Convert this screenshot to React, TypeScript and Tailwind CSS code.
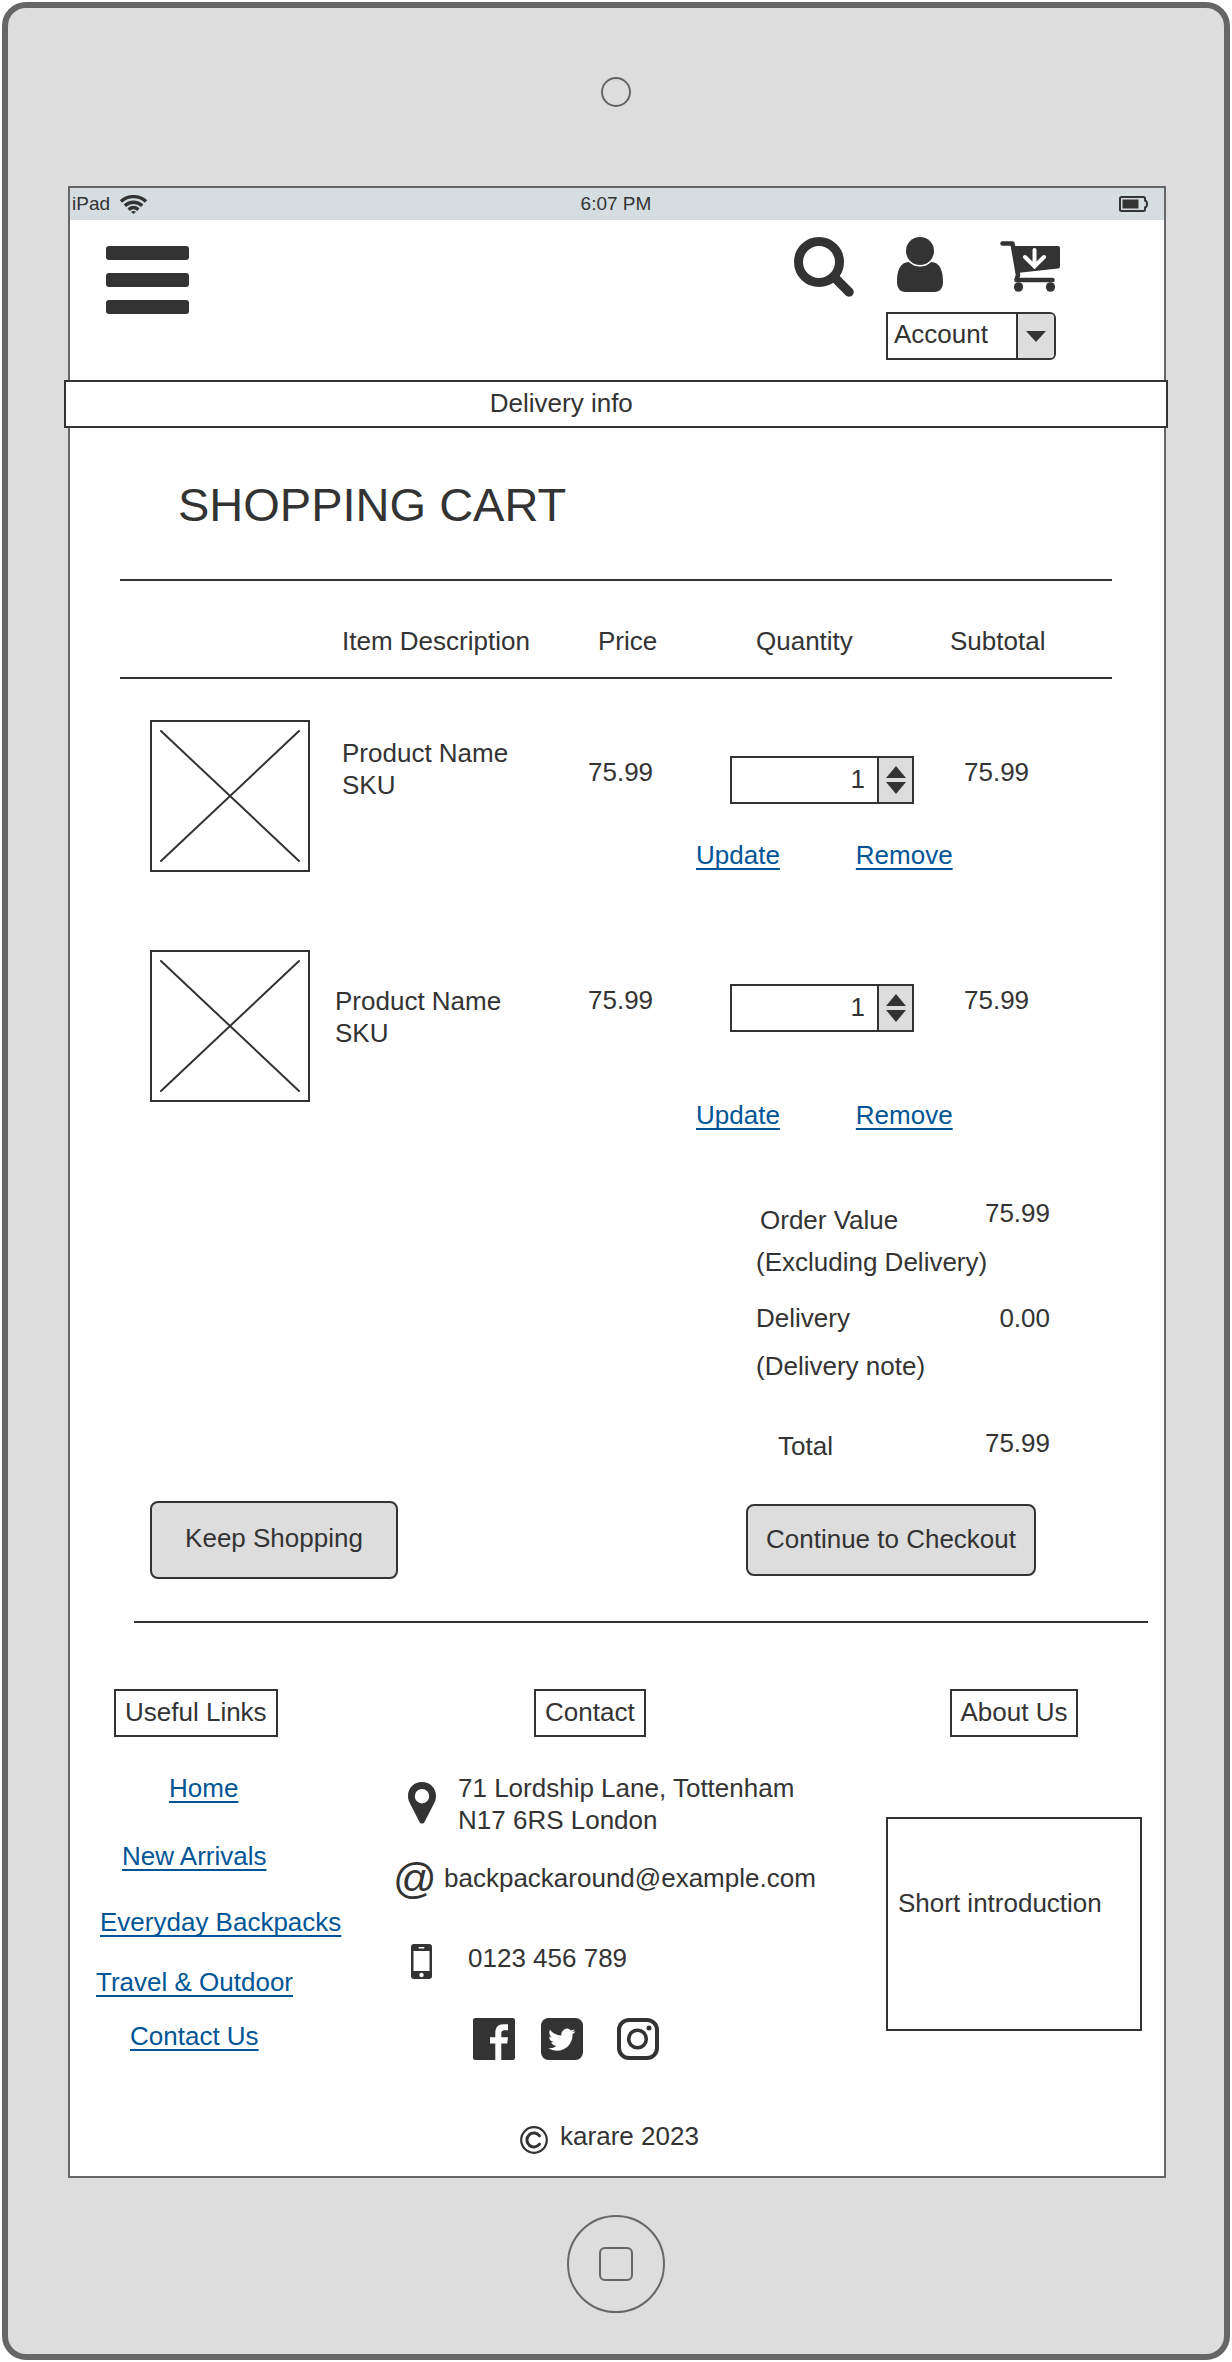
import { useState } from "react";

const linkClass =
  "text-[#005596] underline decoration-2 underline-offset-4 [text-decoration-skip-ink:none]";

function WifiIcon() {
  return (
    <svg width="27" height="19" viewBox="0 0 27 19" fill="none" stroke="#333" strokeWidth="3.400" aria-hidden="true">
      <path d="M1 6.500C8 0 19 0 26 6.500" />
      <path d="M4.800 10.700C10 6 17 6 22.200 10.700" />
      <path d="M8.600 14.600C11.600 12.100 15.400 12.100 18.400 14.600" />
      <path d="M11 16.800C12.400 15.800 14.600 15.800 16 16.800L13.500 19Z" fill="#333" stroke="none" />
    </svg>
  );
}

function BatteryIcon() {
  return (
    <svg width="29" height="16" viewBox="0 0 29 16" aria-hidden="true">
      <path
        d="M2.500 1H24.500Q26 1 26 2.500V4.500Q28 5 28 8T26 11.500V13.500Q26 15 24.500 15H2.500Q1 15 1 13.500V2.500Q1 1 2.500 1Z"
        fill="none"
        stroke="#333"
        strokeWidth="2"
      />
      <rect x="3.500" y="3.500" width="16" height="9" fill="#333" />
    </svg>
  );
}

function SearchIcon() {
  return (
    <svg width="60" height="60" viewBox="0 0 60 60" fill="none" stroke="#333" aria-hidden="true">
      <circle cx="25" cy="25" r="20.500" strokeWidth="9" />
      <path d="M41 41L55 55" strokeWidth="9.500" strokeLinecap="round" />
    </svg>
  );
}

function UserIcon() {
  return (
    <svg width="46" height="55" viewBox="0 0 46 55" fill="#333" aria-hidden="true">
      <path d="M12 25C3 25 0 34 0 44.500C0 51 3 55 8.500 55H37.500C43 55 46 51 46 44.500C46 34 43 25 34 25C27 30.500 19 30.500 12 25Z" />
      <circle cx="23" cy="14" r="15.500" fill="#fff" />
      <circle cx="23" cy="14" r="14" />
    </svg>
  );
}

function CartIcon() {
  return (
    <svg width="60" height="51" viewBox="0 0 60 51" fill="none" aria-hidden="true">
      <path
        d="M2.500 2.500H12.500L18 34L16.500 39H52.500"
        stroke="#333"
        strokeWidth="4.500"
        strokeLinecap="round"
        strokeLinejoin="round"
      />
      <path d="M11 5H58Q60 5 60 7V25.500Q60 27.300 58 27.500L17 32Z" fill="#333" />
      <ellipse cx="18.500" cy="46" rx="4.600" ry="4.800" fill="#333" />
      <ellipse cx="50.500" cy="46" rx="4.600" ry="4.800" fill="#333" />
      <path d="M34.500 9V25M25 16L34.500 25.500L44 16" stroke="#fff" strokeWidth="4" strokeLinecap="round" />
    </svg>
  );
}

function PinIcon() {
  return (
    <svg width="28" height="42" viewBox="0 0 28 42" fill="#333" aria-hidden="true">
      <path
        fillRule="evenodd"
        d="M14 0C22 0 28 6 28 14C28 17 27 19.500 26 21.500L16.500 40C15.500 42 12.500 42 11.500 40L2 21.500C1 19.500 0 17 0 14C0 6 6 0 14 0ZM14 7A7.200 7.200 0 1 0 14 21.400A7.200 7.200 0 1 0 14 7Z"
      />
    </svg>
  );
}

function PhoneIcon() {
  return (
    <svg width="21" height="35" viewBox="0 0 21 35" aria-hidden="true">
      <rect width="21" height="35" rx="3" fill="#333" />
      <rect x="2.500" y="7" width="16" height="20" fill="#fff" />
      <rect x="7.500" y="3" width="6" height="1.500" rx="0.700" fill="#fff" />
      <circle cx="10.500" cy="31" r="2.200" fill="#fff" />
    </svg>
  );
}

function FacebookIcon() {
  return (
    <svg width="42" height="42" viewBox="0 0 42 42" aria-hidden="true">
      <rect width="42" height="42" rx="2.500" fill="#333" />
      <path
        d="M22.300 42V25.500H17V19.300H22.300V15C22.300 9.500 25 6.300 30.500 6.300H35V12.300H31.500C29 12.300 28.300 13.500 28.300 15.800V19.300H35L34.200 25.500H28.300V42Z"
        fill="#fff"
      />
    </svg>
  );
}

function TwitterIcon() {
  return (
    <svg width="42" height="42" viewBox="0 0 42 42" aria-hidden="true">
      <rect width="42" height="42" rx="7.500" fill="#333" />
      <path
        transform="translate(7.200 8.200) scale(1.130)"
        fill="#fff"
        d="M23.953 4.570a10 10 0 01-2.825.775 4.958 4.958 0 002.163-2.723c-.951.555-2.005.959-3.127 1.184a4.920 4.920 0 00-8.384 4.482C7.690 8.095 4.067 6.130 1.640 3.162a4.822 4.822 0 00-.666 2.475c0 1.710.870 3.213 2.188 4.096a4.904 4.904 0 01-2.228-.616v.060a4.923 4.923 0 003.946 4.827 4.996 4.996 0 01-2.212.085 4.936 4.936 0 004.604 3.417 9.867 9.867 0 01-6.102 2.105c-.390 0-.779-.023-1.170-.067a13.995 13.995 0 007.557 2.209c9.053 0 13.998-7.496 13.998-13.985 0-.210 0-.420-.015-.630A9.935 9.935 0 0024 4.590z"
      />
    </svg>
  );
}

function InstagramIcon() {
  return (
    <svg width="42" height="42" viewBox="0 0 42 42" fill="none" stroke="#333" aria-hidden="true">
      <rect x="2" y="2" width="38" height="38" rx="10" strokeWidth="4" />
      <circle cx="20.500" cy="21" r="8.800" strokeWidth="3.600" />
      <circle cx="32" cy="10" r="2.500" fill="#333" stroke="none" />
    </svg>
  );
}

function CopyrightIcon() {
  return (
    <svg width="28" height="28" viewBox="0 0 28 28" fill="none" stroke="#333" aria-hidden="true">
      <circle cx="14" cy="14" r="12.800" strokeWidth="2.200" />
      <path d="M19.500 9.800A7 7 0 1 0 19.500 18.200" strokeWidth="3" strokeLinecap="round" />
    </svg>
  );
}

function ImagePlaceholder() {
  return (
    <div className="h-[152px] w-40 border-2 border-[#333]">
      <svg
        className="size-full"
        viewBox="0 0 156 148"
        stroke="#333"
        strokeWidth="2"
        role="img"
        aria-label="Product image"
      >
        <path d="M9 9L147 139M147 9L9 139" strokeLinecap="round" />
      </svg>
    </div>
  );
}

function QuantityStepper({ label }: { label: string }) {
  const [value, setValue] = useState(1);
  return (
    <div className="flex h-12 w-[184px] border-2 border-[#333]">
      <input
        type="number"
        min={0}
        aria-label={label}
        value={value}
        onChange={(e) => setValue(Number(e.target.value))}
        className="min-w-0 flex-1 bg-white pr-3 pb-0.5 text-right outline-none [appearance:textfield] [&::-webkit-inner-spin-button]:appearance-none [&::-webkit-outer-spin-button]:appearance-none"
      />
      <div className="flex w-[35px] flex-col items-center justify-center gap-1 border-l-2 border-[#333] bg-[#ddd]">
        <button type="button" aria-label="Increase quantity" onClick={() => setValue(value + 1)}>
          <svg className="block" width="20" height="12" viewBox="0 0 20 12" aria-hidden="true">
            <path d="M10 0L20 12H0Z" fill="#333" />
          </svg>
        </button>
        <button type="button" aria-label="Decrease quantity" onClick={() => setValue(Math.max(0, value - 1))}>
          <svg className="block" width="20" height="12" viewBox="0 0 20 12" aria-hidden="true">
            <path d="M0 0H20L10 12Z" fill="#333" />
          </svg>
        </button>
      </div>
    </div>
  );
}

const rows = [
  { description: "pt-[58px] pl-[7px]", cell: "pt-[77px]", links: "h-[105px] pt-[35px]" },
  { description: "pt-[76px]", cell: "pt-[75px]", links: "h-[98px] pt-[67px]" },
];

function CartRow({ index }: { index: number }) {
  const row = rows[index];
  return (
    <tbody className="align-top">
      <tr>
        <td rowSpan={2} className="pt-[41px] pl-[30px]">
          <ImagePlaceholder />
        </td>
        <td rowSpan={2} className={row.description}>
          Product Name
          <br />
          SKU
        </td>
        <td className={row.cell}>75.99</td>
        <td className={row.cell}>
          <QuantityStepper label={`Quantity of product ${index + 1}`} />
        </td>
        <td className={row.cell}>
          <span className="pl-3.5">75.99</span>
        </td>
      </tr>
      <tr>
        <td colSpan={3} className={row.links}>
          <div className="flex gap-[76px] pl-[108px]">
            <a href="#update" className={linkClass}>
              Update
            </a>
            <a href="#remove" className={linkClass}>
              Remove
            </a>
          </div>
        </td>
      </tr>
    </tbody>
  );
}

function StatusBar() {
  return (
    <div className="grid h-8 grid-cols-3 items-center bg-[#d6dde0] pr-4 pl-0.5 text-[19px] leading-8">
      <div className="flex items-center gap-2.5">
        <span>iPad</span>
        <WifiIcon />
      </div>
      <span className="pl-3 text-center">6:07 PM</span>
      <div className="flex justify-end">
        <BatteryIcon />
      </div>
    </div>
  );
}

function Header() {
  return (
    <header className="flex items-start justify-between pt-[17px] pr-[104px] pb-5 pl-9">
      <button type="button" aria-label="Menu" className="mt-[9px] flex flex-col gap-[13px]">
        <span className="block h-3.5 w-[83px] rounded-[3px] bg-[#333]" />
        <span className="block h-3.5 w-[83px] rounded-[3px] bg-[#333]" />
        <span className="block h-3.5 w-[83px] rounded-[3px] bg-[#333]" />
      </button>
      <div className="flex flex-col items-end gap-[15px]">
        <div className="flex h-[60px] items-start">
          <button type="button" aria-label="Search" className="mr-[43px]">
            <SearchIcon />
          </button>
          <button type="button" aria-label="User" className="mr-[57px]">
            <UserIcon />
          </button>
          <button type="button" aria-label="Cart" className="mt-1">
            <CartIcon />
          </button>
        </div>
        <div className="relative mr-1 h-12 w-[170px]">
          <select
            aria-label="Account"
            className="size-full appearance-none rounded-r-md border-2 border-[#333] bg-white pb-1 pl-1.5"
          >
            <option>Account</option>
          </select>
          <span className="pointer-events-none absolute inset-y-0.5 right-0.5 flex w-[38px] items-center justify-center rounded-r border-l-2 border-[#333] bg-[#ddd]">
            <svg width="20" height="11" viewBox="0 0 20 11" aria-hidden="true">
              <path d="M0 0H20L10 11Z" fill="#333" />
            </svg>
          </span>
        </div>
      </div>
    </header>
  );
}

function OrderSummary() {
  return (
    <dl className="mt-[66px] mr-[114px] ml-auto w-[294px]">
      <div className="flex justify-between">
        <dt className="pt-[7px] pl-1">Order Value</dt>
        <dd>75.99</dd>
      </div>
      <dd className="mt-2.5">(Excluding Delivery)</dd>
      <div className="mt-6 flex justify-between">
        <dt>Delivery</dt>
        <dd>0.00</dd>
      </div>
      <dd className="mt-4">(Delivery note)</dd>
      <div className="mt-[45px] flex justify-between">
        <dt className="pt-[3px] pl-[22px]">Total</dt>
        <dd>75.99</dd>
      </div>
    </dl>
  );
}

const usefulLinks = [
  { text: "Home", place: "mt-[35px] ml-[75px]" },
  { text: "New Arrivals", place: "mt-9 ml-7" },
  { text: "Everyday Backpacks", place: "mt-[34px] ml-1.5" },
  { text: "Travel & Outdoor", place: "mt-7 ml-0.5" },
  { text: "Contact Us", place: "mt-[22px] ml-9" },
];

function BoxTitle({ children }: { children: string }) {
  return <h2 className="flex h-12 w-fit items-center border-2 border-[#333] px-[9px] pb-0.5">{children}</h2>;
}

function Footer() {
  return (
    <footer className="mt-[66px] pb-[22px]">
      <div className="grid grid-cols-[323fr_493fr_278fr] items-start">
        <nav aria-label="Useful links" className="pl-6">
          <div className="pl-5">
            <BoxTitle>Useful Links</BoxTitle>
          </div>
          <ul className="whitespace-nowrap">
            {usefulLinks.map((link) => (
              <li key={link.text} className={link.place}>
                <a href="#link" className={linkClass}>
                  {link.text}
                </a>
              </li>
            ))}
          </ul>
        </nav>
        <section>
          <div className="pl-[141px]">
            <BoxTitle>Contact</BoxTitle>
          </div>
          <div className="mt-[35px] flex items-start">
            <span className="w-[65px] pt-2.5 pl-[15px]">
              <PinIcon />
            </span>
            <address className="not-italic">
              71 Lordship Lane, Tottenham
              <br />
              N17 6RS London
            </address>
          </div>
          <div className="mt-[26px] flex h-8">
            <span className="w-[51px] text-[43px] leading-8" aria-hidden="true">
              @
            </span>
            <span>backpackaround@example.com</span>
          </div>
          <div className="mt-12 flex h-8">
            <span className="w-[75px] pt-0.5 pl-[18px]">
              <PhoneIcon />
            </span>
            <span>0123 456 789</span>
          </div>
          <div className="mt-11 flex pl-20">
            <a href="#facebook" aria-label="Facebook" className="mr-[26px]">
              <FacebookIcon />
            </a>
            <a href="#twitter" aria-label="Twitter" className="mr-[34px]">
              <TwitterIcon />
            </a>
            <a href="#instagram" aria-label="Instagram">
              <InstagramIcon />
            </a>
          </div>
        </section>
        <section className="pr-[22px]">
          <div className="flex justify-center">
            <BoxTitle>About Us</BoxTitle>
          </div>
          <div className="mt-20 h-[214px] border-2 border-[#333] pt-[68px] pl-2.5">Short introduction</div>
        </section>
      </div>
      <div className="mt-[60px] flex justify-center gap-3 pr-[15px]">
        <span className="h-[34px] pt-1.5">
          <CopyrightIcon />
        </span>
        <span>karare 2023</span>
      </div>
    </footer>
  );
}

export default function App() {
  return (
    <div className="bg-white p-0.5 font-['Liberation_Sans',sans-serif] text-[26px] leading-8 text-[#333]">
      <div className="rounded-[24px] border-[6px] border-[#666] bg-[#ddd] pt-[69px] pr-[58px] pb-[41px] pl-[60px]">
        <div className="flex justify-center pr-0.5">
          <div className="size-[30px] rounded-full border-2 border-[#666]" />
        </div>
        <div className="mt-[79px] border-2 border-[#666] bg-white">
          <StatusBar />
          <Header />
          <div className="-mr-1 -ml-1.5 flex h-12 items-center justify-center border-2 border-[#333] bg-white pr-[10%] pb-0.5">
            Delivery info
          </div>
          <main>
            <h1 className="mt-[51px] ml-[108px] text-[47px] leading-[52px]">SHOPPING CART</h1>
            <div className="mt-12 mr-[52px] ml-[50px]">
              <table className="w-full table-fixed border-separate border-spacing-0 text-left">
                <colgroup>
                  <col className="w-[215px]" />
                  <col className="w-[253px]" />
                  <col className="w-[142px]" />
                  <col className="w-[220px]" />
                  <col className="w-[162px]" />
                </colgroup>
                <thead>
                  <tr className="*:border-y-2 *:border-[#333] *:pt-11 *:pb-5 *:font-normal">
                    <td />
                    <th scope="col" className="pl-[7px]">Item Description</th>
                    <th scope="col" className="pl-2.5">Price</th>
                    <th scope="col" className="pl-[26px]">Quantity</th>
                    <th scope="col">Subtotal</th>
                  </tr>
                </thead>
                <CartRow index={0} />
                <CartRow index={1} />
              </table>
            </div>
            <OrderSummary />
            <div className="mt-[39px] flex items-center justify-between pr-32 pl-20">
              <button type="button" className="h-[78px] w-[248px] rounded-lg border-2 border-[#333] bg-[#ddd] pb-1">
                Keep Shopping
              </button>
              <button type="button" className="h-[72px] w-[290px] rounded-lg border-2 border-[#333] bg-[#ddd] pb-0.5">
                Continue to Checkout
              </button>
            </div>
          </main>
          <hr className="mt-[42px] mr-4 ml-16 border-t-2 border-[#333]" />
          <Footer />
        </div>
        <div className="mt-[37px] flex justify-center pr-0.5">
          <div className="flex size-[98px] items-center justify-center rounded-full border-2 border-[#666]">
            <div className="size-[34px] rounded-md border-2 border-[#666]" />
          </div>
        </div>
      </div>
    </div>
  );
}
